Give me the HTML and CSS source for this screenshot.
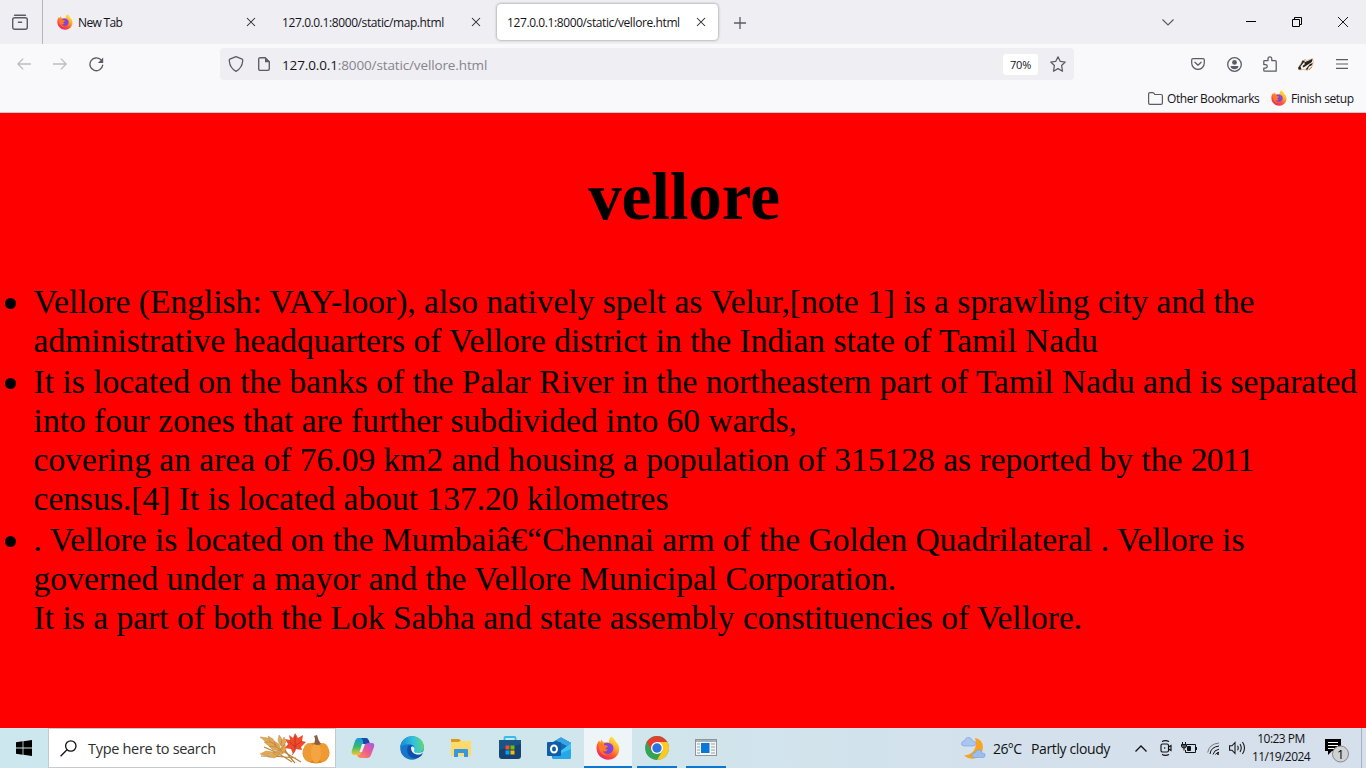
FILE: index.html
```html
<!DOCTYPE html>
<html lang="en">
<head>
<meta charset="utf-8">
<title>vellore</title>
<link rel="stylesheet" href="styles.css">
</head>
<body>
<svg class="defs" width="0" height="0" aria-hidden="true">
  <defs>
    <linearGradient id="ffBody" x1="0.85" y1="0" x2="0.25" y2="1"><stop offset="0" stop-color="#fff04a"/><stop offset=".35" stop-color="#ffb52a"/><stop offset=".65" stop-color="#ff5a36"/><stop offset="1" stop-color="#f01a6c"/></linearGradient>
    <linearGradient id="ffGlobe" x1="0" y1="1" x2="1" y2="0"><stop offset="0" stop-color="#5b50d6"/><stop offset="1" stop-color="#a33ae0"/></linearGradient>
    <symbol id="firefox" viewBox="0 0 24 24">
      <path d="M15.500 0.500C18 2 19.200 4.200 19.800 6L21.500 7.500C23.300 10 23.800 13.500 22.500 17C20.800 21.200 16.700 23.700 12.200 23.700C6 23.700.8 19 .5 12.500C.4 9.300 1.500 6.500 3 4.500L4.300 6.200C4.500 5.200 5 4.300 5.800 3.500C6 5 7 6 8.300 6.500C10 6 11.500 6 13 6.600C12.600 4.500 13.500 2 15.500.5Z" fill="url(#ffBody)"/>
      <path d="M8 7.500C10.500 6 15 6.500 16.800 9.500C18.500 12.500 17 16.500 13.800 17.500C10.500 18.400 7.500 16.700 7 14C9 15 11 14.600 12 13.500C10.500 13.600 9.200 12.800 9.500 11.500L12 10.500C11.500 9.500 9.500 9.500 8 9.300Z" fill="url(#ffGlobe)"/>
      <path d="M3 8C5 7.500 7.200 8.300 8 9.500L12 10.300C11.500 11.700 9.600 11.500 9.200 12.600C8.800 13.800 10 14.500 11.500 14.500C9.800 16 7.500 15.600 6.300 14.500C6.800 17 9 19 12 19C7 20.500 2.500 16 3 8Z" fill="#ff7a28"/>
    </symbol>
    <symbol id="cross" viewBox="0 0 10 10"><path d="M1 1L9 9M9 1L1 9" fill="none" stroke="#26262c" stroke-width="1.050"/></symbol>
  </defs>
</svg>

<header class="browser">
  <div class="tabstrip">
    <div class="recent">
      <svg width="16" height="16" viewBox="0 0 16 16" fill="none" stroke="#5b5b66" stroke-width="1.400" stroke-linecap="round"><path d="M2.500 1.200H13.500"/><rect x=".7" y="3.700" width="14.600" height="11.600" rx="2"/><path d="M6.400 8.300H9.600"/></svg>
    </div>
    <div class="tab first">
      <svg class="fav" width="16" height="16"><use href="#firefox"/></svg>
      <span class="label newtab">New Tab</span>
      <svg class="close" width="10" height="10"><use href="#cross"/></svg>
    </div>
    <div class="tab">
      <span class="label map">127.0.0.1:8000/static/map.html</span>
      <svg class="close" width="10" height="10"><use href="#cross"/></svg>
    </div>
    <div class="tab active">
      <span class="label vel">127.0.0.1:8000/static/vellore.html</span>
      <svg class="close" width="10" height="10"><use href="#cross"/></svg>
    </div>
    <svg class="plus" width="12" height="12" viewBox="0 0 12 12"><path d="M6 0V12M0 6H12" stroke="#5b5b66" stroke-width="1.300"/></svg>
    <div class="winbtns">
      <svg width="12" height="7" viewBox="0 0 12 7"><path d="M.5.5L6 5.900L11.500.5" fill="none" stroke="#5b5b66" stroke-width="1.200"/></svg>
      <svg class="min" width="10" height="10" viewBox="0 0 10 10"><path d="M0 4.500H10" stroke="#000"/></svg>
      <svg class="max" width="10" height="10" viewBox="0 0 10 10" fill="none" stroke="#000"><path d="M.5 2.500H7.500V9.500H.5ZM2.500 2.500V.5H9.500V7.500H7.500"/></svg>
      <svg class="exit" width="10" height="10" viewBox="0 0 10 10"><path d="M0 0L10 10M10 0L0 10" stroke="#000" stroke-width=".9"/></svg>
    </div>
  </div>

  <div class="toolbar">
    <div class="nav">
      <svg width="14" height="12" viewBox="0 0 14 12" fill="none" stroke="#bcbcc2" stroke-width="1.300"><path d="M14 6H.8M6.200.6L.8 6L6.200 11.400"/></svg>
      <svg width="14" height="12" viewBox="0 0 14 12" fill="none" stroke="#bcbcc2" stroke-width="1.300"><path d="M0 6H13.200M7.800.6L13.200 6L7.800 11.400"/></svg>
      <svg width="15" height="15" viewBox="0 0 15 15"><path d="M11.700 2.600A6.400 6.400 0 1 0 13.700 8.200" fill="none" stroke="#5b5b66" stroke-width="1.350" stroke-linecap="round"/><path d="M14.200.4V5.900H8.900Z" fill="#5b5b66"/></svg>
    </div>
    <div class="urlbar">
      <svg width="16" height="16" viewBox="0 0 16 16" fill="none" stroke="#5b5b66" stroke-width="1.300" stroke-linejoin="round"><path d="M8 .7L14.200 3.200C14.900 3.500 14.800 4 14.700 5C14.200 10 11.500 13.500 8 15.300C4.500 13.500 1.800 10 1.300 5C1.200 4 1.100 3.500 1.800 3.200Z"/></svg>
      <svg class="doc" width="12" height="14" viewBox="0 0 12 14"><path d="M2.500.7H7.200L11.300 4.800V11.800C11.300 12.800 10.800 13.300 9.800 13.300H2.200C1.200 13.300.7 12.800.7 11.800V2.200C.7 1.200 1.200.7 2.500.7Z" fill="none" stroke="#5b5b66" stroke-width="1.350"/><path d="M7 .5L11.700 5.200H7Z" fill="#5b5b66"/></svg>
      <span class="url">127.0.0.1<i>:8000/static/vellore.html</i></span>
      <span class="zoom"><b>70%</b></span>
      <svg width="16" height="16" viewBox="0 0 16 16" fill="none" stroke="#5b5b66" stroke-width="1.250" stroke-linejoin="round"><path d="M8 .8L10.200 5.300L15.200 6L11.600 9.500L12.500 15.200L8 12.600L3.500 15.200L4.400 9.500L.8 6L5.800 5.300Z"/></svg>
    </div>
    <div class="tools">
      <svg width="14" height="12" viewBox="0 0 14 12" fill="none" stroke="#5b5b66" stroke-width="1.250" stroke-linecap="round" stroke-linejoin="round"><path d="M2 .7H12Q13.300.7 13.300 2V5C13.300 8.500 10.500 11.400 7 11.400S.7 8.500.7 5V2Q.7.7 2 .7Z"/><path d="M3.900 4.200L7 7.200L10.100 4.200"/></svg>
      <svg class="acct" width="15" height="15" viewBox="0 0 15 15"><circle cx="7.500" cy="7.500" r="6.800" fill="none" stroke="#5b5b66" stroke-width="1.300"/><circle cx="7.500" cy="5.400" r="2.400" fill="#5b5b66"/><path d="M3.500 9H11.500C11.200 11.200 9.700 12.300 7.500 12.300S3.800 11.200 3.500 9Z" fill="#5b5b66"/></svg>
      <svg class="ext" width="14" height="16" viewBox="0 0 14 16" fill="none" stroke="#5b5b66" stroke-width="1.250" stroke-linejoin="round"><path d="M5 4.500V2.700A1.900 1.900 0 0 1 8.800 2.700V4.500H12.200Q13.200 4.500 13.200 5.500V15.200H1.600Q.8 15.200.8 14.400V12H2.500A1.700 1.700 0 0 0 2.500 8.500H.8V5.300Q.8 4.500 1.600 4.500Z"/></svg>
      <svg class="badger" width="16" height="13" viewBox="0 0 16 13"><path d="M.5 9.500L4.500 2.500L7 3L12 1.500L14.500.6L15.300 4L14.500 8L9.500 12.300L5 11.500L1.500 12Z" fill="#f8f2ea" stroke="#d9a06a" stroke-width=".6"/><path d="M4.500 2.500L7 3L4.500 6L2.500 8.500L3.500 11.500L.3 11.500V9.500L3 6ZM6 4.500L11 2.500L14.500.8L13.800 4L10 6.500L5.500 9.500L4.500 8L7 6ZM9.500 9L12 6L14.800 5L13.500 7.500L11 8.500L9.500 11.800L7.500 11.500Z" fill="#252321"/><path d="M7.500 1L6 2.500M14 9L11 12" stroke="#c58c5c"/></svg>
      <svg class="menu" width="12" height="10" viewBox="0 0 12 10"><path d="M0 .6H12M0 5H12M0 9.400H12" stroke="#5b5b66" stroke-width="1.200"/></svg>
    </div>
  </div>

  <div class="bookmarks">
    <svg width="15" height="13" viewBox="0 0 15 13" fill="none" stroke="#5b5b66" stroke-width="1.200"><path d="M.6 2Q.6.6 2 .6H4.600Q5.300.6 5.800 1.200L6.800 2.500H13Q14.400 2.500 14.400 3.900V11Q14.400 12.400 13 12.400H2Q.6 12.400.6 11Z"/></svg>
    <span class="other">Other Bookmarks</span>
    <svg class="fav" width="16" height="16"><use href="#firefox"/></svg>
    <span class="finish">Finish setup</span>
  </div>
</header>

<main class="page">
  <h1>vellore</h1>
  <ul>
    <li>Vellore (English: VAY-loor), also natively spelt as Velur,[note 1] is a sprawling city and the<br>administrative headquarters of Vellore district in the Indian state of Tamil Nadu</li>
    <li>It is located on the banks of the Palar River in the northeastern part of Tamil Nadu and is separated<br>into four zones that are further subdivided into 60 wards,<br>covering an area of 76.09 km2 and housing a population of 315128 as reported by the <span class="year">2011</span><br>census.[4] It is located about 137.20 kilometres</li>
    <li>. Vellore is located on the Mumbaiâ€“Chennai arm of the Golden Quadrilateral . Vellore is<br>governed under a mayor and the Vellore Municipal Corporation.<br>It is a part of both the Lok Sabha and state assembly constituencies of Vellore.</li>
  </ul>
</main>

<footer class="taskbar">
  <div class="start"><svg width="16" height="16" viewBox="0 0 16 16"><path d="M0 2.300L6.600 1.300V7.600H0ZM7.400 1.200L16 0V7.600H7.400ZM0 8.400H6.600V14.700L0 13.700ZM7.400 8.400H16V16L7.400 14.800Z" fill="#000"/></svg></div>
  <div class="search">
    <svg width="17" height="17" viewBox="0 0 17 17" fill="none" stroke="#111" stroke-width="1.300"><circle cx="10.800" cy="6" r="5.200"/><path d="M7 9.800L.6 16.200"/></svg>
    <span>Type here to search</span>
    <svg class="harvest" width="72" height="34" viewBox="0 0 72 34">
      <g stroke="#b98236" stroke-width="1.200" fill="none"><path d="M5 8Q20 18 42 31M2 25Q20 25 37 27M21 6Q24 20 36 32M5 16Q20 22 33 31"/></g>
      <g fill="#dfa957" stroke="#b57c32" stroke-width=".4"><path d="M1 6l8 1 5 5-7-1z"/><path d="M9 5l5 3 3 6-6-3zM5 11l7 0 6 4-7 1zM15 10l5 3 2 6-6-4zM10 15l7 1 5 4-8-1zM20 4l3 4-1 7-3-5zM25 6l2 5-4 7-1-6zM26 13l1 6-4 3-1-5zM1 23l6-3 7 1-5 4zM9 26l6-5 6 1-5 5zM14 22l6-3 5 3-6 3z"/></g>
      <path d="M36 2l3 5 5-3-1 6 4 1-5 5 1 3-6-1-3 5-2-5-6-1 3-4-3-5 5 1-1-5 4 3z" fill="#ed4b2b"/><path d="M36 5v15l-3 4M36 16l-5-5M36 15l7-5" fill="none" stroke="#b82b1a" stroke-width=".7"/>
      <ellipse cx="57" cy="22" rx="13.500" ry="10.500" fill="#df8421"/><ellipse cx="50" cy="21.500" rx="6" ry="9.500" fill="#ee9b35"/><ellipse cx="64" cy="21.500" rx="6" ry="9.500" fill="#ee9a30"/><ellipse cx="57" cy="22" rx="5" ry="10" fill="#f4a440"/><path d="M55 13Q57 8 55 5l3-1Q59 9 62 13Q58 15 55 13z" fill="#8a6045"/>
    </svg>
  </div>
  <div class="apps">
    <div class="app"><svg width="24" height="22" viewBox="0 0 24 22"><defs><linearGradient id="cpA" x1="0" y1="0" x2="0" y2="1"><stop stop-color="#169ae8"/><stop offset=".5" stop-color="#35b96f"/><stop offset="1" stop-color="#f6c72b"/></linearGradient><linearGradient id="cpB" x1="1" y1="0" x2="0" y2="1"><stop stop-color="#a65bea"/><stop offset=".5" stop-color="#ef5b91"/><stop offset="1" stop-color="#ff9847"/></linearGradient></defs><path d="M7 1H15Q17 1 18 4L19 7H16Q13 7 12 10L10 16Q9 18 6 18H3Q-.5 18 1 13L4 4Q5 1 7 1Z" fill="url(#cpA)"/><path d="M10 1H15Q17 1 18 4L19 7H16Q13 7 12.500 8Q12 2 10 1Z" fill="#1648ad"/><path d="M17 21H9Q7 21 6 18Q9 18 10 16L13 9Q14 6 18 6H21Q24 6 23 10L20 18Q19 21 17 21Z" fill="url(#cpB)"/><path d="M11 7H14L11 15H8.500Z" fill="#e7f2f7"/></svg></div>
    <div class="app"><svg width="24" height="24" viewBox="0 0 24 24"><defs><linearGradient id="edA" x1="0" y1=".3" x2="1" y2=".2"><stop stop-color="#168bd4"/><stop offset=".55" stop-color="#32c2df"/><stop offset="1" stop-color="#64da69"/></linearGradient></defs><circle cx="12" cy="12" r="11.800" fill="#1478ca"/><path d="M.3 11C1 4.500 6 .2 12 .2C19 .2 24 5.200 24 11C24 15 20.500 17.300 17 16.900C14 16.600 13 15.500 14.400 13.500C16.500 9.500 9 5.500.3 11Z" fill="url(#edA)"/><path d="M8 10C5.500 15 8.500 22 15 22.500C19 22 21.500 20 22.500 18C18 20.500 11 18 11 12C11 10.800 12 10.200 12.500 9.600C11 8.800 9 8.900 8 10Z" fill="#0f4fa5"/><path d="M11.100 11C10.500 15.500 14.200 18.600 18.500 18.600C21 18.500 23.500 16.500 23.600 15C21 17.500 15.500 17.300 14.200 15.700C13.500 14.500 15 13.600 14.500 12C14 10.600 12.100 9.800 11.100 11Z" fill="#e8f3f6"/></svg></div>
    <div class="app"><svg width="22" height="20" viewBox="0 0 22 20"><path d="M1 1H9L11 3H21V18H1Z" fill="#f9cf53"/><path d="M1 1H9L11 3H10L9 4H1Z" fill="#d89b15"/><path d="M1 4H9L11 3H21V18H1Z" fill="#ffda6b"/><path d="M4 19V12Q4 11 5 11H17Q18 11 18 12V19H14V15H8V19Z" fill="#3298e4"/></svg></div>
    <div class="app"><svg width="24" height="24" viewBox="0 0 24 24"><path d="M6.500 6V2Q6.500 1 7.500 1H16.500Q17.500 1 17.500 2V6" fill="none" stroke="#36bceb" stroke-width="1.800"/><path d="M1 4H23V20Q23 23 20 23H4Q1 23 1 20Z" fill="#164371"/><path d="M1 4H23V8L1 14Z" fill="#195485"/><path d="M7.500 9.500H11.500V13.500H7.500Z" fill="#f25022"/><path d="M12.500 9.500H16.500V13.500H12.500Z" fill="#7fba00"/><path d="M7.500 14.500H11.500V18.500H7.500Z" fill="#00a4ef"/><path d="M12.500 14.500H16.500V18.500H12.500Z" fill="#ffb900"/></svg></div>
    <div class="app"><svg width="24" height="23" viewBox="0 0 24 23"><path d="M4 6L14 .5L24 6V20Q24 22 22 22H7Q5 22 5 20Z" fill="#1a86d5"/><path d="M5 6L14 .5L24 6L15 13L8 10Z" fill="#1769b4"/><path d="M14 .5L24 6L20 9L9 3.500Z" fill="#35a5e5"/><path d="M24 6V21L11 16Z" fill="#42c4f3"/><path d="M5 20L24 12V20Q24 22 22 22H6Z" fill="#27a7e8"/><rect x="0" y="5" width="14" height="14" rx="1" fill="#0f5ca9"/><ellipse cx="7" cy="12" rx="3" ry="3.500" fill="none" stroke="#fff" stroke-width="2"/></svg></div>
    <div class="app on full"><svg width="24" height="24"><use href="#firefox"/></svg></div>
    <div class="app on"><svg width="24" height="24" viewBox="0 0 24 24"><circle cx="12" cy="12" r="11.900" fill="#34a353"/><path d="M1.700 6A11.900 11.900 0 0 1 22.300 6H12L7 15Z" fill="#e43e30"/><path d="M22.300 6A11.900 11.900 0 0 1 12 23.900L17.500 14.500L12 6Z" fill="#fcc926"/><circle cx="12" cy="12" r="6" fill="#fff"/><circle cx="12" cy="12" r="4.700" fill="#2d72df"/></svg></div>
    <div class="app on"><svg width="22" height="18" viewBox="0 0 22 18"><rect x=".5" y=".5" width="21" height="16" fill="#f6f6f6" stroke="#8e969b"/><path d="M1 2H21" stroke="#a9b1b5" stroke-width="2"/><path d="M2 5H5M2 8H5M2 11H5M2 14H5M16 5H20M16 8H20M16 11H20M16 14H20" stroke="#9aa0a4"/><rect x="6" y="4" width="8.500" height="10" fill="#0878d8"/></svg></div>
  </div>
  <div class="tray">
    <svg class="weather" width="25" height="24" viewBox="0 0 25 24"><path d="M14 2C20 3 23 8 21.500 14C20 22 11 26 3 19.500C12 19 17 12 14 2Z" fill="#f6a421"/><g stroke="#789fdb" stroke-width=".6"><path d="M3 10Q0 9.500.6 7Q1 4.800 3.500 5Q4.500 1 8 1.500Q11 2 11.500 5Q15 5 14.800 7.500Q14.500 10 12 10Z" fill="#a8c5f3"/><path d="M13 21.500Q10.500 21 11 18.500Q11.500 16.500 14 17Q15.500 13 18.500 14Q21 14.500 21.200 17Q24.500 17 24.200 19.300Q24 21.500 22 21.500Z" fill="#9abcf0"/></g></svg>
    <span class="temp">26°C</span><span class="sky">Partly cloudy</span>
    <svg class="chev" width="12" height="7" viewBox="0 0 12 7"><path d="M.5 6.500L6 1L11.500 6.500" fill="none" stroke="#111" stroke-width="1.300"/></svg>
    <svg class="cam" width="12" height="16" viewBox="0 0 12 16" fill="none" stroke="#111" stroke-width="1.150"><rect x="1" y="4" width="7.500" height="8" rx="1.500"/><path d="M8.500 7L11 5.500V10.500L8.500 9M2 1.500Q5.500-.3 9 1.500M2 14.500Q5.500 16.300 9 14.500"/><circle cx="4.700" cy="8" r=".8" fill="#111" stroke="none"/></svg>
    <svg class="bat" width="16" height="12" viewBox="0 0 16 12" fill="none" stroke="#111"><path d="M6 2.500H14.500V10.500H4.500V8M15.500 5V8M1.500 0V2.500M4.500 0V2.500M3 6V8.500"/><path d="M.5 2.500H5.500V4.500Q5 6 3 6T.5 4.500Z" fill="#555"/><path d="M6.500 4.500H9.500V8.500H6.500Z" fill="#111"/></svg>
    <svg class="wifi" width="13" height="13" viewBox="0 0 13 13" fill="none" stroke="#111"><path d="M.7 10.500Q2 2 12 1" stroke="#777"/><path d="M3 12Q3.800 5 12 4M6 12.500Q7 8 12 7.200M8.500 12.500Q9.500 10.500 12 10.300"/><circle cx="11" cy="12" r="1" fill="#111" stroke="none"/></svg>
    <svg class="vol" width="17" height="14" viewBox="0 0 17 14" fill="none" stroke="#111" stroke-width="1.050"><path d="M.6 4.800H3L6 1.500V12.500L3 9.200H.6ZM8.500 4.800Q10 7 8.500 9.200M11 3Q13.500 7 11 11M13.500 1Q17.500 7 13.500 13"/></svg>
    <div class="clock"><span class="time">10:23 PM</span><span class="date">11/19/2024</span></div>
    <svg class="note" width="25" height="25" viewBox="0 0 25 25"><path d="M0 1H16V13H7L3 17V13H0Z" fill="#000"/><path d="M3 4.500H13M3 7.500H13M3 10.500H9" stroke="#fff"/><circle cx="15.500" cy="16" r="8" fill="#cfd1d3" stroke="#85898c"/><text x="15.500" y="20.500" text-anchor="middle" font-size="12.500">1</text></svg>
    <i class="edge"></i>
  </div>
</footer>
</body>
</html>
```
FILE: styles.css
```css
* { box-sizing: border-box; }
body { margin: 0; width: 1366px; height: 768px; overflow: hidden; font-family: "Open Sans", "Noto Sans", sans-serif; font-size: 12px; color: #15141a; display: flex; flex-direction: column; }
svg { display: block; flex: none; }
span { white-space: nowrap; }
.defs { position: absolute; }
.browser { height: 113px; background: #f9f9fb; border-bottom: 1px solid #ccccd0; flex: none; }

.tabstrip { height: 44px; background: #efeef3; display: flex; align-items: center; }
.recent { width: 43px; height: 44px; border-right: 1px solid #b6b6bb; padding: 14px 0 0 12px; }
.tab { width: 225px; height: 36px; display: flex; align-items: center; padding: 0 16px 0 10px; }
.tab.first { margin-left: 4px; }
.tab .close { margin-left: auto; }
.tab.first .fav { margin-right: 5px; }
.tab.active { width: 221px; background: #fff; border-radius: 4px; box-shadow: 0 0 3px rgba(0,0,0,.45); padding-right: 12px; }
.plus { margin: 1px 0 0 16px; }
.winbtns { margin: 0 18px 0 auto; display: flex; align-items: center; }
.min { margin-left: 72px; }
.max { margin-left: 36px; }
.exit { margin-left: 36px; }
.label { letter-spacing: -.4px; padding-top: 1px; }
.newtab { letter-spacing: -.65px; }

.toolbar { height: 40px; display: flex; align-items: center; }
.nav { width: 220px; display: flex; align-items: center; padding-left: 17px; gap: 22px; }
.urlbar { width: 854px; height: 32px; background: #efeef3; border-radius: 4px; display: flex; align-items: center; padding: 0 8px; }
.doc { margin-left: 14px; }
.url { margin-left: 12px; padding-top: 2px; font-size: 13.500px; letter-spacing: -.13px; }
.url i { font-style: normal; color: #85858c; }
.zoom { margin: 1px 12px 0 auto; width: 35px; height: 21px; border-radius: 3px; background: #fff; display: flex; align-items: center; justify-content: center; font-size: 11px; letter-spacing: -.2px; }
.zoom b { font-weight: 400; }
.tools { flex: 1; display: flex; align-items: center; padding-left: 117px; }
.acct { margin-left: 22px; }
.ext { margin-left: 21px; }
.badger { margin-left: 21px; }
.menu { margin-left: 22px; }
.bookmarks { height: 28px; display: flex; align-items: center; padding-left: 1148px; }
.other { margin-left: 4px; width: 92px; letter-spacing: -.44px; }
.bookmarks .fav { margin-left: 12px; }
.finish { margin-left: 4px; letter-spacing: -.38px; }

.page { flex: 1; background: #f00; color: #000; font-family: "Liberation Serif", "Times New Roman", serif; font-size: 33.600px; line-height: 39px; }
h1 { margin: 45px 0 0; padding-left: 2px; font-size: 67.200px; line-height: 78px; letter-spacing: -.15px; text-align: center; }
ul { list-style: none; margin: 46px 0 0; padding: 0 0 0 33.600px; display: flex; flex-direction: column; gap: 2px; letter-spacing: -.022px; }
li { white-space: nowrap; }
li::before { content: ""; display: inline-block; width: 11px; height: 11px; border-radius: 50%; background: #000; margin: 0 17.400px 0 -28.400px; vertical-align: 4px; }
.year { letter-spacing: -.8px; }

.taskbar { height: 40px; flex: none; display: flex; background: linear-gradient(90deg, #cde7ef, #d0e5ec 45%, #d4e1ec 75%, #d6dfec); }
.start { width: 48px; padding: 12px 0 0 16px; }
.search { width: 288px; background: #fff; border: 1px solid #c6cacc; display: flex; align-items: center; padding-left: 11px; font-size: 14.500px; color: #2e2e2e; }
.search span { margin-left: 11px; letter-spacing: -.3px; }
.harvest { margin-left: auto; margin-right: 4px; }
.apps { display: flex; gap: 1px; margin-left: 3px; }
.app { width: 48px; display: flex; align-items: center; justify-content: center; }
.on { background: linear-gradient(#0878d4, #0878d4) center bottom / 40px 2px no-repeat; }
.full { background: linear-gradient(#0878d4, #0878d4) center bottom / 48px 2px no-repeat, #edf5f8; }
.tray { margin-left: auto; width: 405px; display: flex; align-items: center; font-size: 14px; color: #111; }
.temp { margin-left: 7px; width: 38px; letter-spacing: -.6px; }
.sky { width: 80px; letter-spacing: -.38px; }
.chev { margin-left: 24px; }
.cam { margin-left: 13px; }
.bat { margin-left: 9px; }
.wifi { margin-left: 10px; }
.vol { margin-left: 9px; }
.clock { width: 60px; margin-left: 5px; display: flex; flex-direction: column; align-items: center; font-size: 12px; line-height: 18px; letter-spacing: -.54px; }
.date { letter-spacing: -.56px; }
.note { margin-left: 14px; margin-top: 5px; }
.edge { width: 1px; height: 40px; background: #a9b1ba; margin-left: auto; margin-right: 4px; }
```
